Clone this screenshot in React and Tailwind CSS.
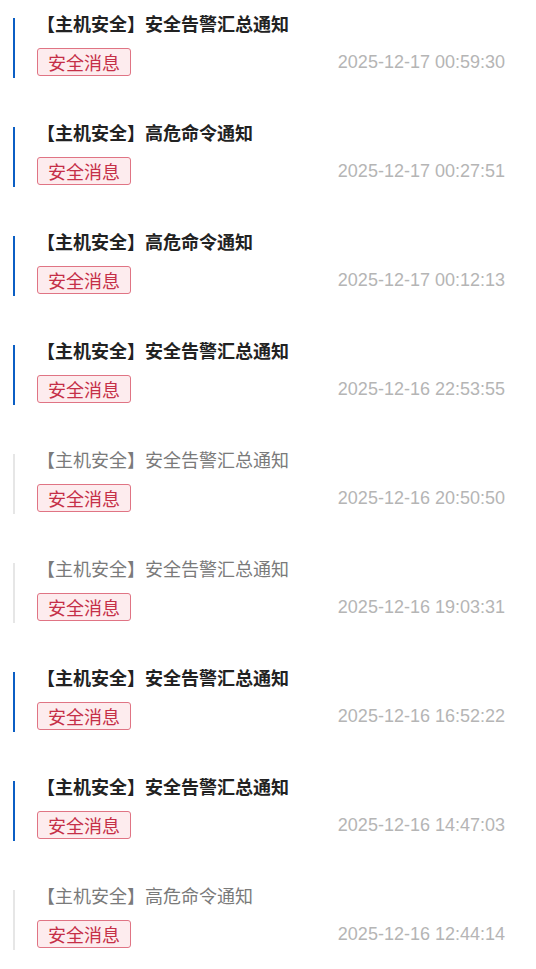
import React from "react";

const messages = [
  { title: "【主机安全】安全告警汇总通知", time: "2025-12-17 00:59:30", read: false },
  { title: "【主机安全】高危命令通知", time: "2025-12-17 00:27:51", read: false },
  { title: "【主机安全】高危命令通知", time: "2025-12-17 00:12:13", read: false },
  { title: "【主机安全】安全告警汇总通知", time: "2025-12-16 22:53:55", read: false },
  { title: "【主机安全】安全告警汇总通知", time: "2025-12-16 20:50:50", read: true },
  { title: "【主机安全】安全告警汇总通知", time: "2025-12-16 19:03:31", read: true },
  { title: "【主机安全】安全告警汇总通知", time: "2025-12-16 16:52:22", read: false },
  { title: "【主机安全】安全告警汇总通知", time: "2025-12-16 14:47:03", read: false },
  { title: "【主机安全】高危命令通知", time: "2025-12-16 12:44:14", read: true },
];

const cjk = "font-['Noto_Sans_CJK_SC','Noto_Sans',sans-serif]";

function MessageItem({ item }) {
  return (
    <div className="flex h-[109px] pl-[13px] pr-[31px]">
      {/* read state marker */}
      <div
        className={`mt-[18px] h-[60px] w-[2px] shrink-0 ${
          item.read ? "bg-[#e6e6e6]" : "bg-[#0b5ec4]"
        }`}
      />
      <div className="ml-[22px] flex-1">
        <div
          className={`mt-[11px] text-[18px] leading-[24px] ${cjk} ${
            item.read ? "font-normal text-[#7a7a7a]" : "font-bold text-[#222]"
          }`}
        >
          {item.title}
        </div>
        <div className="mt-[13px] flex items-center justify-between">
          <span
            className={`h-[28px] rounded-[3px] border border-[#e07484] bg-[#fdecee] px-[10px] text-[18px] leading-[26px] text-[#c52f47] ${cjk}`}
          >
            安全消息
          </span>
          <span className="font-['Liberation_Sans',Arial,sans-serif] text-[18px] text-[#b5b5b5]">
            {item.time}
          </span>
        </div>
      </div>
    </div>
  );
}

export default function App() {
  return (
    <div className="min-h-screen w-full bg-white">
      {messages.map((item, index) => (
        <MessageItem key={index} item={item} />
      ))}
    </div>
  );
}
